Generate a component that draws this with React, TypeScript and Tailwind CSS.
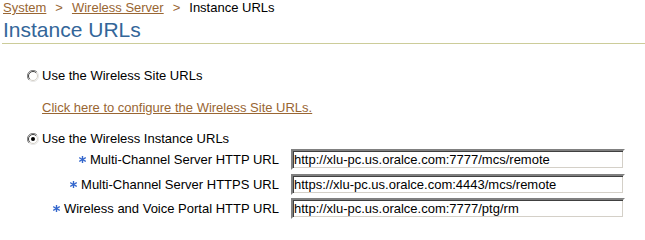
import { useState } from "react";

const rows = [
  { label: "Multi-Channel Server HTTP URL", value: "http://xlu-pc.us.oralce.com:7777/mcs/remote" },
  { label: "Multi-Channel Server HTTPS URL", value: "https://xlu-pc.us.oralce.com:4443/mcs/remote" },
  { label: "Wireless and Voice Portal HTTP URL", value: "http://xlu-pc.us.oralce.com:7777/ptg/rm" },
];

function Radio({ checked }: { checked: boolean }) {
  return (
    <svg width="12" height="12" viewBox="0 0 12 12" className="shrink-0">
      <circle cx="6" cy="6" r="5.5" fill="#ffffff" />
      <path d="M10 2 A5.5 5.5 0 0 0 2 10" fill="none" stroke="#808080" strokeWidth="1" />
      <path d="M9.2 2.8 A4.5 4.5 0 0 0 2.8 9.2" fill="none" stroke="#404040" strokeWidth="1" />
      <path d="M2 10 A5.5 5.5 0 0 0 10 2" fill="none" stroke="#e8e8e8" strokeWidth="1" />
      <path d="M2.8 9.2 A4.5 4.5 0 0 0 9.2 2.8" fill="none" stroke="#d4d0c8" strokeWidth="1" />
      {checked && <circle cx="6" cy="6" r="2" fill="#000000" />}
    </svg>
  );
}

// small blue "required" star
function Required() {
  return (
    <svg width="7" height="7" viewBox="0 0 7 7" className="shrink-0">
      <g stroke="#3366cc" strokeWidth="1.4" strokeLinecap="square">
        <path d="M3.5 0.5 V6.5" />
        <path d="M0.8 2 L6.2 5" />
        <path d="M0.8 5 L6.2 2" />
      </g>
    </svg>
  );
}

export default function App() {
  const [mode, setMode] = useState<"site" | "instance">("instance");

  return (
    <div className="h-[222px] w-[645px] overflow-hidden bg-white font-['Liberation_Sans',Arial,sans-serif] text-[13px] text-black">
      {/* Breadcrumb */}
      <div className="flex h-[15px] items-center gap-[9px] pl-[3px] leading-[15px]">
        <a href="#" className="text-[#996633] underline">System</a>
        <span className="text-[#996633]">&gt;</span>
        <a href="#" className="text-[#996633] underline">Wireless Server</a>
        <span className="text-[#996633]">&gt;</span>
        <span>Instance URLs</span>
      </div>

      {/* Page header */}
      <h1 className="ml-[2px] mt-[2px] border-b border-[#cccc99] pb-[1px] pl-[1px] text-[21px] leading-[25px] text-[#336699]">
        Instance URLs
      </h1>

      <div className="pl-[27px] pt-[25px]">
        <label className="flex h-[14px] cursor-pointer items-center gap-[3px]" onClick={() => setMode("site")}>
          <Radio checked={mode === "site"} />
          <span>Use the Wireless Site URLs</span>
        </label>

        <div className="mt-[18px] pl-[15px] leading-[14px]">
          <a href="#" className="text-[#996633] underline">
            Click here to configure the Wireless Site URLs.
          </a>
        </div>

        <label className="mt-[17px] flex h-[14px] cursor-pointer items-center gap-[3px]" onClick={() => setMode("instance")}>
          <Radio checked={mode === "instance"} />
          <span>Use the Wireless Instance URLs</span>
        </label>
      </div>

      <div className="mt-[3px] grid grid-cols-[279px_334px] gap-x-[12px] gap-y-[3.5px]">
        {rows.map((r) => (
          <div key={r.label} className="contents">
            <div className="flex items-center justify-end gap-[4px] leading-[15px]">
              <Required />
              <span>{r.label}</span>
            </div>
            <input
              readOnly
              value={r.value}
              className="h-[21px] border-2 border-b-white border-l-[#808080] border-r-white border-t-[#808080] px-[1px] font-['Liberation_Sans',Arial,sans-serif] text-[13px] leading-[15px] text-black shadow-[inset_1px_1px_0_#404040,inset_-1px_-1px_0_#d4d0c8] outline-none"
            />
          </div>
        ))}
      </div>
    </div>
  );
}
